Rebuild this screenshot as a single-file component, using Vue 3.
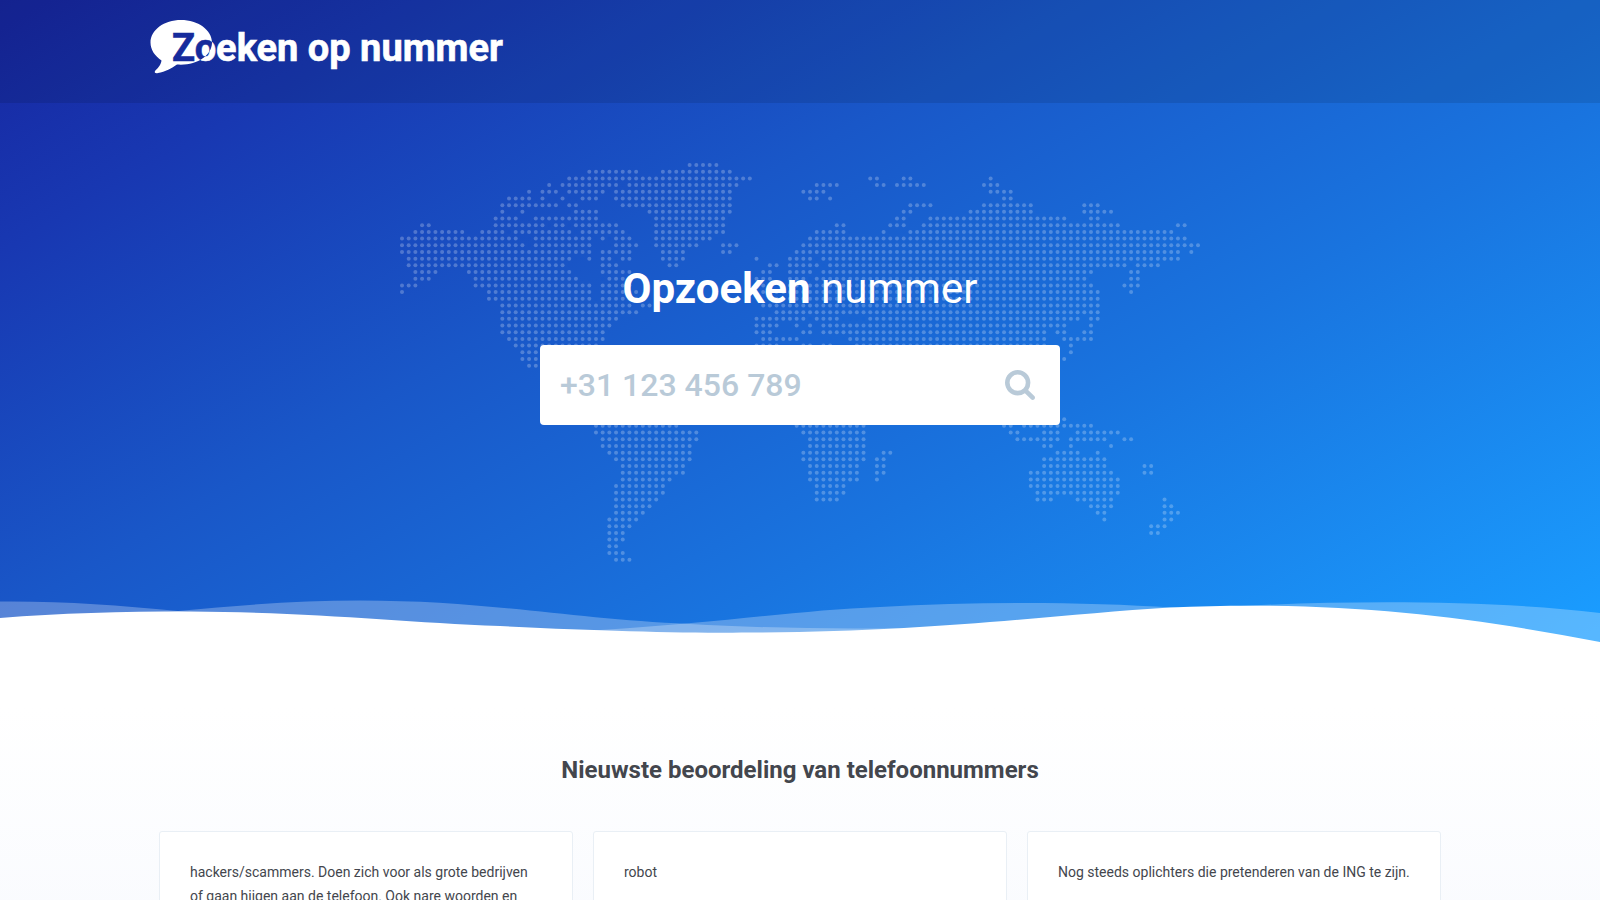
<script setup>
import { ref } from 'vue'

const phone = ref('')

const reviews = [
  'hackers/scammers. Doen zich voor als grote bedrijven of gaan hijgen aan de telefoon. Ook nare woorden en',
  'robot',
  'Nog steeds oplichters die pretenderen van de ING te zijn.'
]

// Land per grid row, as column ranges
const land = [
  '43-47',
  '28-35 39-49',
  '25-52 70-71 75-76 88',
  '22 24-32 34-50 62-65 71-72 74-78 87-89',
  '19 21-23 25-30 32-49 60-63 88-91',
  '16-19 21 24 27-29 32-49 61-62 64 90-91',
  '15-23 25-26 33-49 76-79 87-94 102-104',
  '15 18 26-29 37-49 75-76 85-94 102-106',
  '14-17 20-29 38-48 74-75 79-99 103-104',
  '3-4 14-21 23-24 26-32 38-48 65-66 73-75 78-107 116-117',
  '2-9 12-15 17-25 27-33 38-48 62-66 72 76-115',
  '0-17 20-28 30 32-34 38-46 61-117',
  '0-18 20-28 32-35 38-44 48-50 60-119',
  '0-28 30-34 39-42 48-49 59-116 118',
  '1-25 28 30-31 33-34 39-42 53 58-61 63-116',
  '1-24 30-32 40-41 55-56 58-62 64-108 110-113',
  '2-5 10-25 30-34 54-55 58-61 63-103 109-110',
  '2-4 11-26 31-34 53-55 58-60 62-102 109-110',
  '0-2 11-28 30-34 53-55 58-103 108-110',
  '0 13-28 30-35 54-104 109',
  '13-28 30-35 55-104',
  '15-34 36-37 54-104',
  '15-35 56-104',
  '15-32 53-60 62-65 70-101 103-104',
  '15-31 53-56 59 61 63-99 103',
  '15-30 53-55 60-61 63-96 98-99 102-103',
  '16-30 54-59 67-96 99-103',
  '17-29 53-56 60-61 63-64 68-96 100',
  '18-28 53-62 68-95 100',
  '18-26 53-64 70-95 99',
  '19-25 52-66 70-94',
  '21-24', '21-24', '22-25', '24-30', '26-34', '28-37', '28-39',
  '28-40 58-70 99',
  '29-41 59-69 90-91 93-103',
  '29-44 60-69 91-92 96-98 101-107',
  '30-44 61-69 92-98 100-105 108-109',
  '30-43 61-69 96-97 100 106',
  '31-43 60-69 72-73 98-101 104',
  '32-43 60-69 71-72 96-105',
  '33-42 61-68 71-72 96-105 111-112',
  '33-42 61-68 71-72 94-106 111-112',
  '33-40 61-68 71 94-107',
  '32-39 62-66 94-107',
  '32-39 62-66 95-107',
  '32-38 62-65 95-97 101-106 114',
  '32-37 103-106 114-115',
  '32-36 104-105 114-116',
  '31-35 105 114-115',
  '31-34 112-114',
  '31-33 112-113',
  '31-33',
  '31-32',
  '31-33',
  '32-34'
]

const pitch = 796 / 119
const dots = land.flatMap((row, r) =>
  row.split(' ').flatMap((range) => {
    const [from, to = from] = range.split('-').map(Number)
    return Array.from({ length: to - from + 1 }, (_, i) => ({
      key: `${r}-${from + i}`,
      x: 2 + pitch * (from + i),
      y: 2 + pitch * r
    }))
  })
)
</script>

<template>
  <div class="page">
    <div class="hero">
      <header class="topbar">
        <div class="container">
          <a class="logo" href="#" aria-label="Zoeken op nummer">
            <svg width="360" height="64" viewBox="0 0 360 64">
              <defs>
                <clipPath id="bubble">
                  <path d="M32 10C15 10 1.500 20 1.500 32.500C1.500 40 6 46 12.500 50.500C12 55 9 58 6 61C5 63 7 63.500 9 63C16 62 23 58 28 54.500C47 56 63 46 63 32.500C63 20 49 10 32 10Z" />
                </clipPath>
              </defs>
              <text class="word" x="23" y="51">Zoeken op nummer</text>
              <g clip-path="url(#bubble)">
                <rect width="64" height="64" fill="#fff" />
                <text class="word inner" x="23" y="51">Zoeken op nummer</text>
              </g>
            </svg>
          </a>
        </div>
      </header>

      <main class="lookup">
        <svg class="map" viewBox="0 0 800 400" aria-hidden="true">
          <circle v-for="d in dots" :key="d.key" :cx="d.x" :cy="d.y" r="2" />
        </svg>
        <h1><strong>Opzoeken</strong> nummer</h1>
        <form class="search" @submit.prevent>
          <input v-model="phone" type="tel" placeholder="+31 123 456 789" aria-label="Telefoonnummer" />
          <button type="submit" aria-label="Zoeken">
            <svg width="30" height="30" viewBox="64 128 1664 1664">
              <path d="M1216 832q0-185-131.500-316.500t-316.500-131.500-316.500 131.500-131.500 316.500 131.500 316.500 316.500 131.500 316.500-131.500 131.500-316.500zm512 832q0 52-38 90t-90 38q-54 0-90-38l-343-342q-179 124-399 124-143 0-273.500-55.500t-225-150-150-225-55.500-273.500 55.500-273.500 150-225 225-150 273.500-55.500 273.500 55.500 225 150 150 225 55.500 273.500q0 220-124 399l343 343q37 37 37 90z" />
            </svg>
          </button>
        </form>
      </main>

      <svg class="waves" viewBox="0 0 1600 60" preserveAspectRatio="none" aria-hidden="true">
        <path class="veil" d="M0 1.500C65 1 115 5 178 11C320 26 470 34 600 30C720 23 800 10 880 7C980 1 1090 2 1172 7.500C1330 19 1450 40 1600 55V60H0Z" />
        <path class="veil" d="M0 30C60 22 120 16 178 11C240 5 300 .5 360 .5C490 .5 570 19 690 24C780 29 900 31 1000 24C1100 17 1170 10 1250 5.500C1370 0 1500 1 1600 13V60H0Z" />
        <path class="ground" d="M0 18C60 13 120 11.500 190 11.500C310 12 400 22 500 26C600 31 680 33 750 32.600C930 32 1050 15 1170 7.500C1340 0 1470 17 1600 42V60H0Z" />
      </svg>
    </div>

    <section class="latest">
      <div class="container">
        <h2>Nieuwste beoordeling van telefoonnummers</h2>
        <div class="cards">
          <article v-for="text in reviews" :key="text" class="card">
            <p>{{ text }}</p>
          </article>
        </div>
      </div>
    </section>
  </div>
</template>

<style>
body {
  margin: 0;
  background: #f8fafe;
}
</style>

<style scoped>
.page {
  font-family: Roboto, "Liberation Sans", sans-serif;
  color: #43464d;
}
.container {
  max-width: 1282px;
  margin: 0 auto;
  padding: 0 20px;
}
.hero {
  display: flex;
  flex-direction: column;
  background: linear-gradient(150deg, #1726a0 0%, #1838b2 16%, #1957c8 39%, #1974df 65%, #1a9dff 98%);
}
.topbar {
  padding: 10px 0 29px;
  background: rgba(0, 0, 0, 0.1);
}
.logo {
  display: block;
  width: 360px;
  height: 64px;
  margin-left: -10px;
}
.logo svg {
  display: block;
}
.word {
  font-size: 38px;
  font-weight: 700;
  fill: #fff;
  stroke: #fff;
  stroke-width: 0.6px;
}
.inner {
  fill: #162b9c;
  stroke: #162b9c;
}
.lookup {
  position: relative;
  display: flex;
  flex-direction: column;
  align-items: center;
  padding: 157px 20px 175px;
}
.map {
  position: absolute;
  top: 60px;
  left: 50%;
  width: 800px;
  max-width: 100%;
  transform: translateX(-50%);
  fill: #fff;
  opacity: 0.24;
}
h1 {
  position: relative;
  margin: 0 0 27px;
  font-size: 42px;
  line-height: 58px;
  font-weight: 400;
  color: #fff;
}
h1 strong {
  font-weight: 700;
}
.search {
  position: relative;
  display: flex;
  width: 100%;
  max-width: 520px;
  height: 80px;
  background: #fff;
  border-radius: 4px;
}
.search input {
  flex: 1;
  min-width: 0;
  padding: 0 0 0 20px;
  border: 0;
  outline: 0;
  background: none;
  font: 500 32px Roboto, sans-serif;
  color: #43464d;
}
.search input::placeholder {
  color: #b9cad8;
  opacity: 1;
}
.search button {
  display: flex;
  align-items: center;
  justify-content: center;
  width: 80px;
  padding: 0;
  border: 0;
  background: none;
  cursor: pointer;
}
.search button svg {
  fill: #b9cad8;
}
.waves {
  display: block;
  width: 100%;
  height: 60px;
}
.veil {
  fill: #fff;
  opacity: 0.27;
}
.ground {
  fill: #fff;
}
.latest {
  padding: 92px 0 40px;
  background: linear-gradient(#fff 15%, #f8fafe);
}
h2 {
  margin: 0 0 42px;
  font-size: 24px;
  line-height: 37px;
  font-weight: 700;
  text-align: center;
}
.cards {
  display: grid;
  grid-template-columns: repeat(3, 1fr);
  gap: 20px;
}
.card {
  padding: 28px 30px;
  background: #fff;
  border: 1px solid #e9eff5;
  border-radius: 3px;
}
.card p {
  margin: 0;
  font-size: 14px;
  line-height: 24px;
}
</style>
